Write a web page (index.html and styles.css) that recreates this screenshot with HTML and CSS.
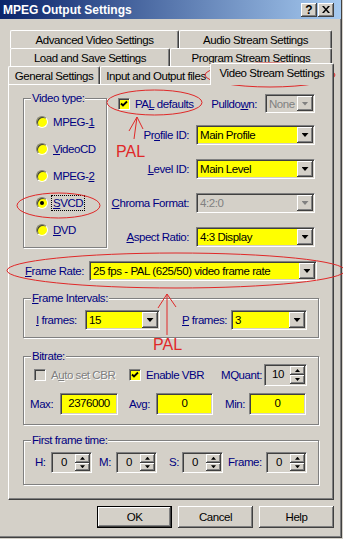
FILE: index.html
```html
<!DOCTYPE html>
<html lang="en">

<head>
  <meta charset="UTF-8">
  <meta name="viewport" content="width=device-width, initial-scale=1.0">
  <title>MPEG Output Settings</title>
  <link rel="stylesheet" href="styles.css">
</head>

<body>
  <div class="window">
    <div class="titlebar">
      <span class="title">MPEG Output Settings</span>
      <div class="caption-buttons">
        <span class="caption-btn">?</span>
        <span class="caption-btn">
          <svg width="8" height="7" viewBox="0 0 8 7"><path d="M0 0h2l2 2.4 2-2.4h2l-3 3.5 3 3.5h-2l-2-2.4-2 2.4h-2l3-3.5z"/></svg>
        </span>
      </div>
    </div>

    <!-- Reiter -->
    <div class="tabs">
      <div class="tab-row tab-row-1">
        <div class="tab tab-advanced">Advanced Video Settings</div>
        <div class="tab tab-audio">Audio Stream Settings</div>
      </div>
      <div class="tab-row tab-row-2">
        <div class="tab tab-load">Load and Save Settings</div>
        <div class="tab tab-program">Program Stream Settings</div>
      </div>
      <div class="tab-row tab-row-3">
        <div class="tab tab-general">General Settings</div>
        <div class="tab tab-files">Input and Output files</div>
        <div class="tab tab-video active">Video Stream Settings</div>
      </div>
    </div>

    <div class="panel">
      <div class="top-section">
        <div class="group video-type">
          <span class="group-title">Video type:</span>
          <div class="radio-row"><span class="radio"></span><span>MPEG-<u>1</u></span></div>
          <div class="radio-row"><span class="radio"></span><span><u>V</u>ideoCD</span></div>
          <div class="radio-row"><span class="radio"></span><span>MPEG-<u>2</u></span></div>
          <div class="radio-row"><span class="radio checked"></span><span class="focus"><u>S</u>VCD</span></div>
          <div class="radio-row"><span class="radio"></span><span><u>D</u>VD</span></div>
        </div>

        <div class="stream-form">
          <div class="defaults-row">
            <span class="checkbox">
              <svg width="8" height="8" viewBox="0 0 8 8"><path d="M1 3.5l2 2 4-4" fill="none" stroke="#000" stroke-width="1.8"/></svg>
            </span>
            <span class="label check-text">PA<u>L</u> defaults</span>
            <span class="label pulldown-label">Pulldo<u>w</u>n:</span>
            <div class="combo disabled combo-pulldown"><span class="combo-text">None</span><span class="combo-btn"></span></div>
          </div>

          <div class="field-grid">
            <span class="label">Pr<u>o</u>file ID:</span>
            <div class="combo"><span class="combo-text">Main Profile</span><span class="combo-btn"></span></div>
            <span class="label"><u>L</u>evel ID:</span>
            <div class="combo"><span class="combo-text">Main Level</span><span class="combo-btn"></span></div>
            <span class="label"><u>C</u>hroma Format:</span>
            <div class="combo disabled"><span class="combo-text">4:2:0</span><span class="combo-btn"></span></div>
            <span class="label"><u>A</u>spect Ratio:</span>
            <div class="combo"><span class="combo-text">4:3 Display</span><span class="combo-btn"></span></div>
          </div>
        </div>
      </div>

      <div class="frame-rate-row">
        <span class="label"><u>F</u>rame Rate:</span>
        <div class="combo combo-frame-rate"><span class="combo-text">25 fps - PAL (625/50) video frame rate</span><span class="combo-btn"></span></div>
      </div>

      <div class="group intervals">
        <span class="group-title"><u>F</u>rame Intervals:</span>
        <span class="label interval-label"><u>I</u> frames:</span>
        <div class="combo combo-i"><span class="combo-text">15</span><span class="combo-btn"></span></div>
        <span class="label interval-label p-label"><u>P</u> frames:</span>
        <div class="combo combo-p"><span class="combo-text">3</span><span class="combo-btn"></span></div>
      </div>

      <div class="group bitrate">
        <span class="group-title">Bitrate:</span>
        <div class="bitrate-row first">
          <div class="check-item auto-cbr">
            <span class="checkbox disabled"></span>
            <span class="disabled-text">A<u>u</u>to set CBR</span>
          </div>
          <div class="check-item enable-vbr">
            <span class="checkbox">
              <svg width="8" height="8" viewBox="0 0 8 8"><path d="M1 3.5l2 2 4-4" fill="none" stroke="#000" stroke-width="1.8"/></svg>
            </span>
            <span class="label">Enable VBR</span>
          </div>
          <span class="label mquant-label">MQuant:</span>
          <div class="spin spin-mquant">
            <span class="spin-value">10</span>
            <span class="spin-buttons"><span class="spin-btn up"></span><span class="spin-btn down"></span></span>
          </div>
        </div>
        <div class="bitrate-row">
          <span class="label max-label">Max:</span>
          <div class="edit edit-max">2376000</div>
          <span class="label avg-label">Avg:</span>
          <div class="edit">0</div>
          <span class="label min-label">Min:</span>
          <div class="edit">0</div>
        </div>
      </div>

      <div class="group first-frame">
        <span class="group-title">First frame time:</span>
        <span class="label time-label h-label">H:</span>
        <div class="spin"><span class="spin-value">0</span><span class="spin-buttons"><span class="spin-btn up"></span><span class="spin-btn down"></span></span></div>
        <span class="label time-label m-label">M:</span>
        <div class="spin"><span class="spin-value">0</span><span class="spin-buttons"><span class="spin-btn up"></span><span class="spin-btn down"></span></span></div>
        <span class="label time-label s-label">S:</span>
        <div class="spin"><span class="spin-value">0</span><span class="spin-buttons"><span class="spin-btn up"></span><span class="spin-btn down"></span></span></div>
        <span class="label time-label frame-label">Frame:</span>
        <div class="spin"><span class="spin-value">0</span><span class="spin-buttons"><span class="spin-btn up"></span><span class="spin-btn down"></span></span></div>
      </div>
    </div>

    <div class="dialog-buttons">
      <div class="button default">OK</div>
      <div class="button">Cancel</div>
      <div class="button">Help</div>
    </div>

    <!-- rote Markierungen -->
    <svg class="annotations" width="343" height="539" viewBox="0 0 343 539">
      <g fill="none" stroke="#e02828" stroke-width="1">
        <ellipse cx="270" cy="75" rx="65" ry="12"/>
        <ellipse cx="154.5" cy="102.5" rx="47.5" ry="12.5"/>
        <ellipse cx="58.5" cy="205.5" rx="41.5" ry="12.5"/>
        <ellipse cx="176" cy="270.5" rx="169" ry="17.5"/>
        <path d="M134 139L137 117M137 117L129 131M137 117L143 129"/>
        <path d="M167 335V294M167 294L158 308M167 294L176 307"/>
      </g>
      <text class="pal-note" x="116" y="157">PAL</text>
      <text class="pal-note" x="153" y="350">PAL</text>
    </svg>
  </div>
</body>

</html>
```

FILE: styles.css
```css
body {
  margin: 0;
  background-color: #d4d0c8;
  font-family: "Liberation Sans", Arial, sans-serif;
  font-size: 11.5px;
  letter-spacing: -0.45px;
  color: #000000;
}

.window {
  position: relative;
  width: 342px;
  height: 538px;
  box-sizing: border-box;
  background-color: #d4d0c8;
  border-right: 1px solid #404040;
  border-bottom: 1px solid #404040;
  box-shadow: inset -1px -1px #808080;
}

/* Titelleiste */
.titlebar {
  display: flex;
  align-items: center;
  justify-content: space-between;
  height: 19px;
  padding: 0 7px 0 3px;
  background: linear-gradient(to right, #0a246a, #a6caf0);
}

.title {
  color: #ffffff;
  font-weight: bold;
  font-size: 12px;
  letter-spacing: 0;
}

.caption-buttons {
  display: flex;
  gap: 1px;
}

.caption-btn {
  display: flex;
  align-items: center;
  justify-content: center;
  width: 16px;
  height: 14px;
  box-sizing: border-box;
  background-color: #d4d0c8;
  box-shadow: inset -1px -1px #404040, inset 1px 1px #ffffff, inset -2px -2px #808080;
  font-weight: bold;
  font-size: 12px;
  letter-spacing: 0;
}

/* Reiter */
.tabs {
  padding-top: 11px;
}

.tab-row {
  display: flex;
  height: 18px;
}

.tab-row-1,
.tab-row-2 {
  padding-left: 10px;
}

.tab-row-3 {
  padding-left: 8px;
}

.tab {
  box-sizing: border-box;
  height: 18px;
  padding-top: 2px;
  border: 1px solid #ffffff;
  border-right-color: #404040;
  border-bottom: none;
  border-radius: 2px 2px 0 0;
  box-shadow: inset -1px 0 #808080;
  background-color: #d4d0c8;
  text-align: center;
  line-height: 15px;
  white-space: nowrap;
}

.tab-advanced { width: 169px; }
.tab-audio { width: 153px; }
.tab-load { width: 160px; }
.tab-program { width: 162px; }
.tab-general { width: 92px; }
.tab-files { width: 112px; }

.tab.active {
  position: relative;
  z-index: 1;
  width: 124px;
  height: 22px;
  margin-top: -3px;
  margin-left: -2px;
}

/* Hauptbereich */
.panel {
  margin-left: 8px;
  width: 326px;
  height: 416px;
  box-sizing: border-box;
  padding: 9px 0 0 14px;
  border: 1px solid;
  border-color: #ffffff #404040 #404040 #ffffff;
  box-shadow: inset -1px -1px #808080;
}

.label {
  color: #000080;
  white-space: nowrap;
}

.disabled-text {
  color: #808080;
  text-shadow: 1px 1px #ffffff;
  white-space: nowrap;
}

.group {
  position: relative;
  box-sizing: border-box;
  border: 1px solid #808080;
  box-shadow: inset 1px 1px #ffffff, 1px 1px #ffffff;
}

.group-title {
  position: absolute;
  top: -7px;
  left: 7px;
  padding: 0 1px;
  background-color: #d4d0c8;
  color: #000080;
  line-height: 13px;
  white-space: nowrap;
}

.top-section {
  display: flex;
  align-items: flex-start;
}

.video-type {
  width: 84px;
  height: 150px;
  margin-top: 4px;
  padding: 9px 0 0 12px;
}

.radio-row {
  display: flex;
  align-items: center;
  gap: 5px;
  height: 27px;
  color: #000080;
}

.radio {
  position: relative;
  width: 12px;
  height: 12px;
  box-sizing: border-box;
  border-radius: 50%;
  border: 1px solid;
  border-color: #808080 #ffffff #ffffff #808080;
  box-shadow: inset 1px 1px #404040;
  background-color: #ffff00;
}

.radio.checked::after {
  content: "";
  position: absolute;
  left: 3px;
  top: 3px;
  width: 4px;
  height: 4px;
  border-radius: 50%;
  background-color: #000000;
}

.focus {
  outline: 1px dotted #000000;
  outline-offset: 1px;
}

.stream-form {
  width: 205px;
  margin-left: 3px;
}

.defaults-row {
  display: flex;
  align-items: center;
  height: 19px;
  padding-left: 8px;
}

.checkbox {
  display: flex;
  align-items: center;
  justify-content: center;
  width: 12px;
  height: 12px;
  box-sizing: border-box;
  border: 1px solid;
  border-color: #808080 #ffffff #ffffff #808080;
  box-shadow: inset 1px 1px #404040;
  background-color: #ffff00;
}

.checkbox.disabled {
  background-color: #d4d0c8;
}

.check-text {
  margin-left: 5px;
}

.pulldown-label {
  margin-left: auto;
  margin-right: 8px;
}

.field-grid {
  display: grid;
  grid-template-columns: 79px 119px;
  grid-auto-rows: 20px;
  column-gap: 7px;
  row-gap: 14px;
  align-items: center;
  margin-top: 12px;
}

.field-grid .label {
  text-align: right;
}

/* Kombinationsfelder */
.combo {
  display: flex;
  height: 20px;
  box-sizing: border-box;
  padding: 1px;
  border: 1px solid;
  border-color: #808080 #ffffff #ffffff #808080;
  box-shadow: inset 1px 1px #404040, inset -1px -1px #d4d0c8;
  background-color: #ffff00;
}

.combo.disabled {
  background-color: #d4d0c8;
  color: #808080;
}

.combo-text {
  flex: 1;
  padding: 1px 0 0 2px;
  line-height: 15px;
  white-space: nowrap;
  overflow: hidden;
}

.combo-btn {
  display: flex;
  align-items: center;
  justify-content: center;
  width: 16px;
  box-sizing: border-box;
  background-color: #d4d0c8;
  box-shadow: inset -1px -1px #404040, inset 1px 1px #ffffff, inset -2px -2px #808080;
}

.combo-btn::after {
  content: "";
  width: 7px;
  height: 4px;
  background-color: #000000;
  clip-path: polygon(0 0, 100% 0, 50% 100%);
}

.combo.disabled .combo-btn::after {
  background-color: #808080;
}

.combo-pulldown {
  width: 50px;
  height: 19px;
}

.frame-rate-row {
  display: flex;
  align-items: center;
  margin-top: 13px;
  padding-left: 2px;
}

.frame-rate-row .label {
  margin-right: 5px;
}

.combo-frame-rate {
  width: 228px;
}

/* Gruppen unten */
.intervals {
  display: flex;
  width: 296px;
  height: 40px;
  margin-top: 17px;
  padding: 11px 0 0 12px;
}

.interval-label {
  width: 49px;
  line-height: 20px;
}

.p-label {
  margin-left: 22px;
}

.combo-i { width: 75px; }
.combo-p { width: 76px; }

.bitrate {
  width: 296px;
  height: 69px;
  margin-top: 18px;
  padding: 7px 0 0 6px;
}

.bitrate-row {
  display: flex;
  align-items: center;
  height: 22px;
}

.bitrate-row.first {
  padding-left: 4px;
}

.bitrate-row + .bitrate-row {
  margin-top: 7px;
}

.check-item {
  display: flex;
  align-items: center;
  gap: 5px;
}

.auto-cbr { width: 95px; }
.enable-vbr { width: 92px; }
.mquant-label { width: 43px; }

.max-label { width: 30px; }
.avg-label { width: 27px; margin-left: 11px; }
.min-label { width: 24px; margin-left: 12px; }

.edit {
  width: 57px;
  height: 22px;
  box-sizing: border-box;
  border: 1px solid;
  border-color: #808080 #ffffff #ffffff #808080;
  box-shadow: inset 1px 1px #404040, inset -1px -1px #d4d0c8;
  background-color: #ffff00;
  text-align: center;
  line-height: 19px;
}

.edit-max {
  width: 58px;
}

/* Drehfelder */
.spin {
  display: flex;
  width: 41px;
  height: 21px;
  box-sizing: border-box;
  padding: 1px;
  border: 1px solid;
  border-color: #808080 #ffffff #ffffff #808080;
  box-shadow: inset 1px 1px #404040, inset -1px -1px #d4d0c8;
}

.spin-mquant {
  width: 43px;
  height: 22px;
}

.spin-value {
  flex: 1;
  text-align: center;
  line-height: 17px;
}

.spin-buttons {
  display: flex;
  flex-direction: column;
  width: 15px;
}

.spin-btn {
  flex: 1;
  display: flex;
  align-items: center;
  justify-content: center;
  box-shadow: inset -1px -1px #404040, inset 1px 1px #ffffff, inset -2px -2px #808080;
}

.spin-btn::after {
  content: "";
  width: 5px;
  height: 3px;
  background-color: #000000;
}

.spin-btn.up::after {
  clip-path: polygon(50% 0, 100% 100%, 0 100%);
}

.spin-btn.down::after {
  clip-path: polygon(0 0, 100% 0, 50% 100%);
}

.first-frame {
  display: flex;
  width: 296px;
  height: 45px;
  margin-top: 15px;
  padding: 11px 0 0 11px;
}

.time-label {
  line-height: 21px;
}

.h-label { width: 16px; }
.m-label { width: 17px; margin-left: 7px; }
.s-label { width: 13px; margin-left: 12px; }
.frame-label { width: 38px; margin-left: 5px; }

/* Schaltflächen */
.dialog-buttons {
  display: flex;
  justify-content: flex-end;
  gap: 6px;
  margin-top: 6px;
  padding-right: 7px;
}

.button {
  width: 75px;
  height: 22px;
  box-sizing: border-box;
  box-shadow: inset -1px -1px #404040, inset 1px 1px #ffffff, inset -2px -2px #808080;
  text-align: center;
  line-height: 22px;
}

.button.default {
  border: 1px solid #000000;
  line-height: 20px;
}

/* Anmerkungen */
.annotations {
  position: absolute;
  left: 0;
  top: 0;
  pointer-events: none;
}

.pal-note {
  fill: #e02828;
  font-family: "Liberation Sans", sans-serif;
  font-size: 16px;
  letter-spacing: 0;
}
```
